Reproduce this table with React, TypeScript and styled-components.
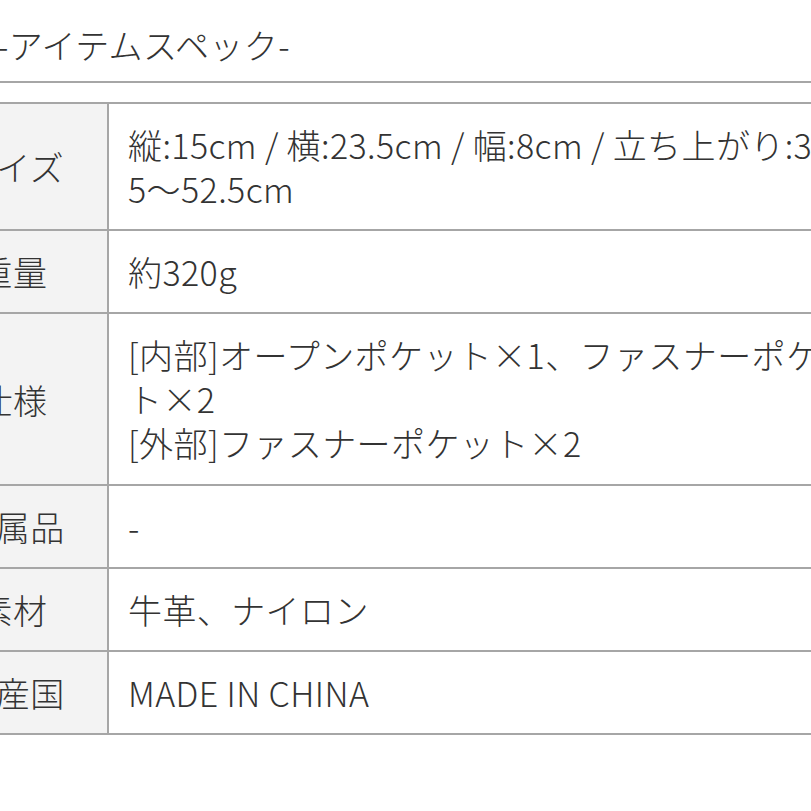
import React from "react";
import styled, { createGlobalStyle } from "styled-components";

const Global = createGlobalStyle`
  html, body {
    margin: 0;
    padding: 0;
    background: #ffffff;
    overflow: hidden;
  }
  body {
    font-family: "Noto Sans CJK JP", "Noto Sans", sans-serif;
    color: #333333;
  }
`;

const Page = styled.div`
  width: 1100px;
  margin-left: -81px;
`;

const Title = styled.h2`
  margin: 0;
  padding: 23px 0 14px 78px;
  font-size: 34px;
  letter-spacing: 0.4px;
  line-height: 44px;
  font-weight: 300;
  color: #333333;
  white-space: nowrap;
`;

const Rule = styled.hr`
  margin: 0 0 19px 0;
  border: none;
  height: 2px;
  background: #a6a6a6;
`;

const SpecTable = styled.table`
  width: 1100px;
  border-collapse: collapse;
  table-layout: fixed;
  border-top: 2px solid #a6a6a6;
`;

const Row = styled.tr`
  border-bottom: 2px solid #a6a6a6;
`;

const Label = styled.th`
  width: 168px;
  background: #f3f3f3;
  border-right: 2px solid #a6a6a6;
  font-weight: 300;
  font-size: 34px;
  letter-spacing: 0.4px;
  line-height: 44px;
  text-align: center;
  vertical-align: middle;
  padding: 19px 10px 18px;
  white-space: nowrap;
`;

const Value = styled.td<{ $lines: number }>`
  font-size: 34px;
  font-weight: 300;
  letter-spacing: 0.4px;
  line-height: 44px;
  padding: 19px 19px ${(p) => (p.$lines > 2 ? 19 : 18)}px;
  vertical-align: top;
  white-space: nowrap;
`;

const rows: { label: string; lines: string[] }[] = [
  { label: "サイズ", lines: ["縦:15cm / 横:23.5cm / 幅:8cm / 立ち上がり:3", "5〜52.5cm"] },
  { label: "重量", lines: ["約320g"] },
  {
    label: "仕様",
    lines: [
      "[内部]オープンポケット×1、ファスナーポケッ",
      "ト×2",
      "[外部]ファスナーポケット×2",
    ],
  },
  { label: "付属品", lines: ["-"] },
  { label: "素材", lines: ["牛革、ナイロン"] },
  { label: "原産国", lines: ["MADE IN CHINA"] },
];

export default function App() {
  return (
    <>
      <Global />
      <Page>
        <Title>-アイテムスペック-</Title>
        <Rule />
        <SpecTable>
          <tbody>
            {rows.map((r) => (
              <Row key={r.label}>
                <Label>{r.label}</Label>
                <Value $lines={r.lines.length}>
                  {r.lines.map((l, i) => (
                    <React.Fragment key={i}>
                      {i > 0 && <br />}
                      {l}
                    </React.Fragment>
                  ))}
                </Value>
              </Row>
            ))}
          </tbody>
        </SpecTable>
      </Page>
    </>
  );
}
